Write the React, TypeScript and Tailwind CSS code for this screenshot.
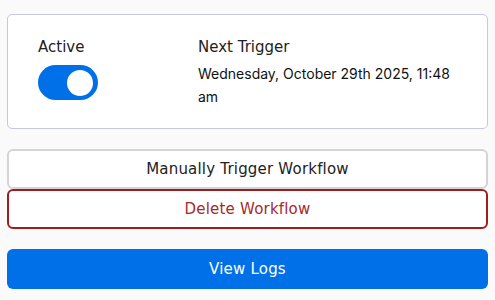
import React from "react";

export default function App() {
  const head = { fontFamily: '"DejaVu Sans", "Open Sans", sans-serif' };
  const body = { fontFamily: 'Inter, "Liberation Sans", sans-serif' };
  return (
    <div className="w-[495px] h-[300px] bg-[#fafafa] px-[7px] pt-[14px]" style={head}>
      <div className="h-[115px] rounded-[5px] border border-[#c7c7de] bg-white flex pl-[30px] pt-[22px]">
        <div className="w-[160px] flex flex-col">
          <div className="text-[15px] leading-[20px] text-[#222]">Active</div>
          <button className="mt-[8px] w-[60px] h-[35px] rounded-full bg-[#0070e8] flex items-center justify-end pr-[5px]">
            <span className="block w-[26px] h-[26px] rounded-full bg-white" />
          </button>
        </div>
        <div className="flex flex-col">
          <div className="text-[15px] leading-[20px] text-[#222]">Next Trigger</div>
          <div className="mt-[5px] text-[14px] leading-[23px] text-[#111]" style={body}>
            Wednesday, October 29th 2025, 11:48
            <br />
            am
          </div>
        </div>
      </div>
      <button className="mt-[20px] w-full h-[40px] rounded-[6px] border-2 border-[#d4d4d8] bg-white text-[15px] tracking-[0.2px] text-[#222]">
        Manually Trigger Workflow
      </button>
      <button className="w-full h-[40px] rounded-[6px] border-2 border-[#a11c1c] bg-white text-[15px] tracking-[0.2px] text-[#a52a2a]">
        Delete Workflow
      </button>
      <button className="mt-[20px] w-full h-[40px] rounded-[6px] bg-[#0070e8] text-[15px] tracking-[0.2px] text-white">
        View Logs
      </button>
    </div>
  );
}
